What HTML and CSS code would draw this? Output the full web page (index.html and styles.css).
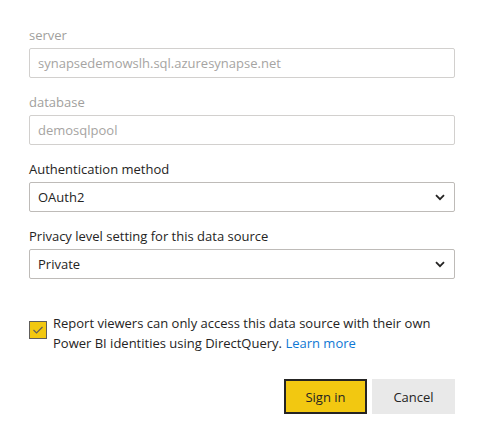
FILE: index.html
```html
<!DOCTYPE html>
<html lang="en">
<head>
<meta charset="utf-8">
<title>Configure data source</title>
<link rel="stylesheet" href="styles.css">
</head>
<body>
<div class="dialog">
  <div class="field">
    <div class="label disabled">server</div>
    <div class="input disabled">synapsedemowslh.sql.azuresynapse.net</div>
  </div>
  <div class="field">
    <div class="label disabled">database</div>
    <div class="input disabled">demosqlpool</div>
  </div>
  <div class="field">
    <div class="label">Authentication method</div>
    <div class="input select">
      <span>OAuth2</span>
      <svg class="chev" width="10" height="7" viewBox="0 0 10 7"><path d="M1 1.2 L5 5.2 L9 1.2" fill="none" stroke="#252423" stroke-width="1.8"/></svg>
    </div>
  </div>
  <div class="field">
    <div class="label">Privacy level setting for this data source</div>
    <div class="input select">
      <span>Private</span>
      <svg class="chev" width="10" height="7" viewBox="0 0 10 7"><path d="M1 1.2 L5 5.2 L9 1.2" fill="none" stroke="#252423" stroke-width="1.8"/></svg>
    </div>
  </div>
  <div class="check-row">
    <div class="checkbox">
      <svg width="12" height="10" viewBox="0 0 12 10"><path d="M1.5 5 L4.5 8 L10.5 2" fill="none" stroke="#605e5c" stroke-width="1.2"/></svg>
    </div>
    <p class="check-text">Report viewers can only access this data source with their own Power BI identities using DirectQuery. <a href="#" class="link">Learn more</a></p>
  </div>
  <div class="actions">
    <button class="btn primary">Sign in</button>
    <button class="btn secondary">Cancel</button>
  </div>
</div>
</body>
</html>
```
FILE: styles.css
```css
html, body {
  margin: 0;
  padding: 0;
  background: #ffffff;
}
body {
  font-family: "Open Sans", "Noto Sans", "Liberation Sans", sans-serif;
  font-size: 13px;
  color: #252423;
}
.dialog {
  width: 426px;
  padding: 25px 0 0 29px;
}
.field {
  margin-bottom: 14px;
}
.label {
  height: 20px;
  line-height: 20px;
  margin-bottom: 3px;
  color: #252423;
}
.label.disabled {
  color: #a19f9d;
}
.input {
  box-sizing: border-box;
  height: 30px;
  border: 1px solid #c8c6c4;
  border-radius: 2px;
  padding: 0 8px;
  line-height: 28px;
  color: #252423;
  background: #fff;
}
.input.disabled {
  border-color: #d2d0ce;
  color: #a6a4a2;
}
.select {
  display: flex;
  align-items: center;
  justify-content: space-between;
  border-color: #bebbb8;
}
.chev {
  display: block;
  margin-right: 1px;
}
.check-row {
  display: flex;
  align-items: flex-start;
  gap: 6px;
  margin-top: 34px;
}
.checkbox {
  box-sizing: border-box;
  flex: none;
  width: 18px;
  height: 18px;
  margin-top: 8px;
  background: #f2c811;
  border: 1px solid #605e5c;
  display: flex;
  align-items: center;
  justify-content: center;
}
.check-text {
  margin: 0;
  line-height: 20px;
  font-size: 13px;
  color: #252423;
  width: 390px;
}
.link {
  color: #0f78d4;
  text-decoration: none;
}
.actions {
  display: flex;
  justify-content: flex-end;
  gap: 5px;
  margin-top: 26px;
}
.btn {
  box-sizing: border-box;
  width: 83px;
  height: 35px;
  font-family: inherit;
  font-size: 13px;
  color: #252423;
  border-radius: 0;
  cursor: pointer;
}
.primary {
  background: #f2c811;
  border: 2px solid #252423;
}
.secondary {
  background: #e9e9e9;
  border: 1px solid #e9e9e9;
}
```
